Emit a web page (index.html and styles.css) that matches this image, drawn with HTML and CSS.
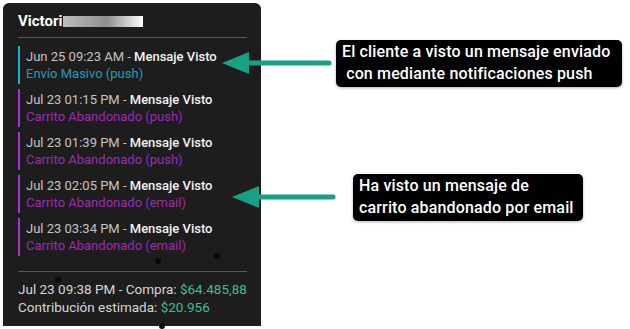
FILE: index.html
```html
<!DOCTYPE html>
<html lang="en">
<head>
    <meta charset="UTF-8">
    <meta name="viewport" content="width=device-width, initial-scale=1.0">
    <title>Historial del cliente</title>
    <link rel="stylesheet" href="styles.css">
</head>
<body>
    <div class="panel">
        <h2 class="name">Victori<span class="blur"></span></h2>

        <div class="events">
            <div class="event push">
                <div class="when">Jun 25 09:23 AM - <b>Mensaje Visto</b></div>
                <div class="what">Envío Masivo (push)</div>
            </div>
            <div class="event cart">
                <div class="when">Jul 23 01:15 PM - <b>Mensaje Visto</b></div>
                <div class="what">Carrito Abandonado (push)</div>
            </div>
            <div class="event cart">
                <div class="when">Jul 23 01:39 PM - <b>Mensaje Visto</b></div>
                <div class="what">Carrito Abandonado (push)</div>
            </div>
            <div class="event cart">
                <div class="when">Jul 23 02:05 PM - <b>Mensaje Visto</b></div>
                <div class="what">Carrito Abandonado (email)</div>
            </div>
            <div class="event cart">
                <div class="when">Jul 23 03:34 PM - <b>Mensaje Visto</b></div>
                <div class="what">Carrito Abandonado (email)</div>
            </div>
        </div>

        <div class="summary">
            <p>Jul 23 09:38 PM - Compra: <span class="money">$64.485,88</span></p>
            <p>Contribución estimada: <span class="money">$20.956</span></p>
        </div>

        <!-- specks on the capture -->
        <i class="dot" style="left:211px; top:250px"></i>
        <i class="dot" style="left:152px; top:255px"></i>
        <i class="dot" style="left:52px; top:274px"></i>
        <i class="dot" style="left:156px; top:320px"></i>
    </div>

    <!-- annotations -->
    <svg class="arrow arrow-1" width="112" height="24" viewBox="0 0 112 24">
        <line x1="24" y1="12" x2="107" y2="12" stroke="#18a084" stroke-width="5" stroke-linecap="round"/>
        <polygon points="0,12 27,1 27,23" fill="#18a084"/>
    </svg>
    <div class="note note-1">El cliente a visto un mensaje enviado<br>&nbsp;con mediante notificaciones push</div>

    <svg class="arrow arrow-2" width="106" height="24" viewBox="0 0 106 24">
        <line x1="24" y1="12" x2="101" y2="12" stroke="#18a084" stroke-width="5" stroke-linecap="round"/>
        <polygon points="0,12 27,1 27,23" fill="#18a084"/>
    </svg>
    <div class="note note-2">Ha visto un mensaje de<br>carrito abandonado por email</div>
</body>
</html>
```

FILE: styles.css
```css
body {
    margin: 0;
    background-color: #fff;
    font-family: Roboto, 'Noto Sans', sans-serif;
    position: relative;
    height: 329px;
    overflow: hidden;
}

.panel {
    position: relative;
    width: 229px;
    height: 323px;
    margin: 3px 0 0 3px;
    padding: 0 14px 0 15px;
    background-color: #1d1d1d;
    border-radius: 6px 6px 0 0;
    color: #c4c4c4;
}

.name {
    margin: 0;
    padding: 10px 0 7px;
    font-size: 15px;
    line-height: 17px;
    font-weight: 700;
    color: #fff;
    border-bottom: 1px solid #595959;
}

.blur {
    display: inline-block;
    width: 80px;
    height: 11px;
    margin-left: 1px;
    vertical-align: -1px;
    background: linear-gradient(to right, #bdbdbd, #8f8f8f 55%, #d8d8d8 85%, #fff);
}

.events {
    padding-top: 8px;
}

.event {
    padding: 2px 0 2px 6px;
    margin-bottom: 5px;
    font-size: 13px;
    line-height: 17px;
    border-left: 2px solid #b02fd2;
}

.event b {
    font-weight: 500;
    color: #f2f2f2;
}

.event.push {
    border-left-color: #17b3cc;
}

.push .what {
    color: #1aa0b4;
}

.cart .what {
    color: #9e2ab8;
}

.summary {
    margin-top: 15px;
    padding-top: 8px;
    border-top: 1px solid #595959;
}

.summary p {
    margin: 0;
    font-size: 13.5px;
    line-height: 18px;
    color: #d6d6d6;
    white-space: nowrap;
}

.money {
    color: #3cbf8d;
}

.dot {
    position: absolute;
    width: 6px;
    height: 6px;
    border-radius: 50%;
    background-color: #0a0510;
}

.arrow {
    position: absolute;
}

.arrow-1 {
    left: 222px;
    top: 51px;
}

.arrow-2 {
    left: 232px;
    top: 185px;
}

.note {
    position: absolute;
    background-color: #000;
    color: #fff;
    border-radius: 5px;
    font-size: 16px;
    font-weight: 500;
    letter-spacing: 0.15px;
    line-height: 22px;
    padding: 1px 6px 2px 6px;
    box-shadow: 0 1px 3px rgba(0, 0, 0, 0.3);
    white-space: nowrap;
}

.note-1 {
    left: 336px;
    top: 40px;
    width: 274px;
}

.note-2 {
    left: 353px;
    top: 174px;
    width: 218px;
}
```
